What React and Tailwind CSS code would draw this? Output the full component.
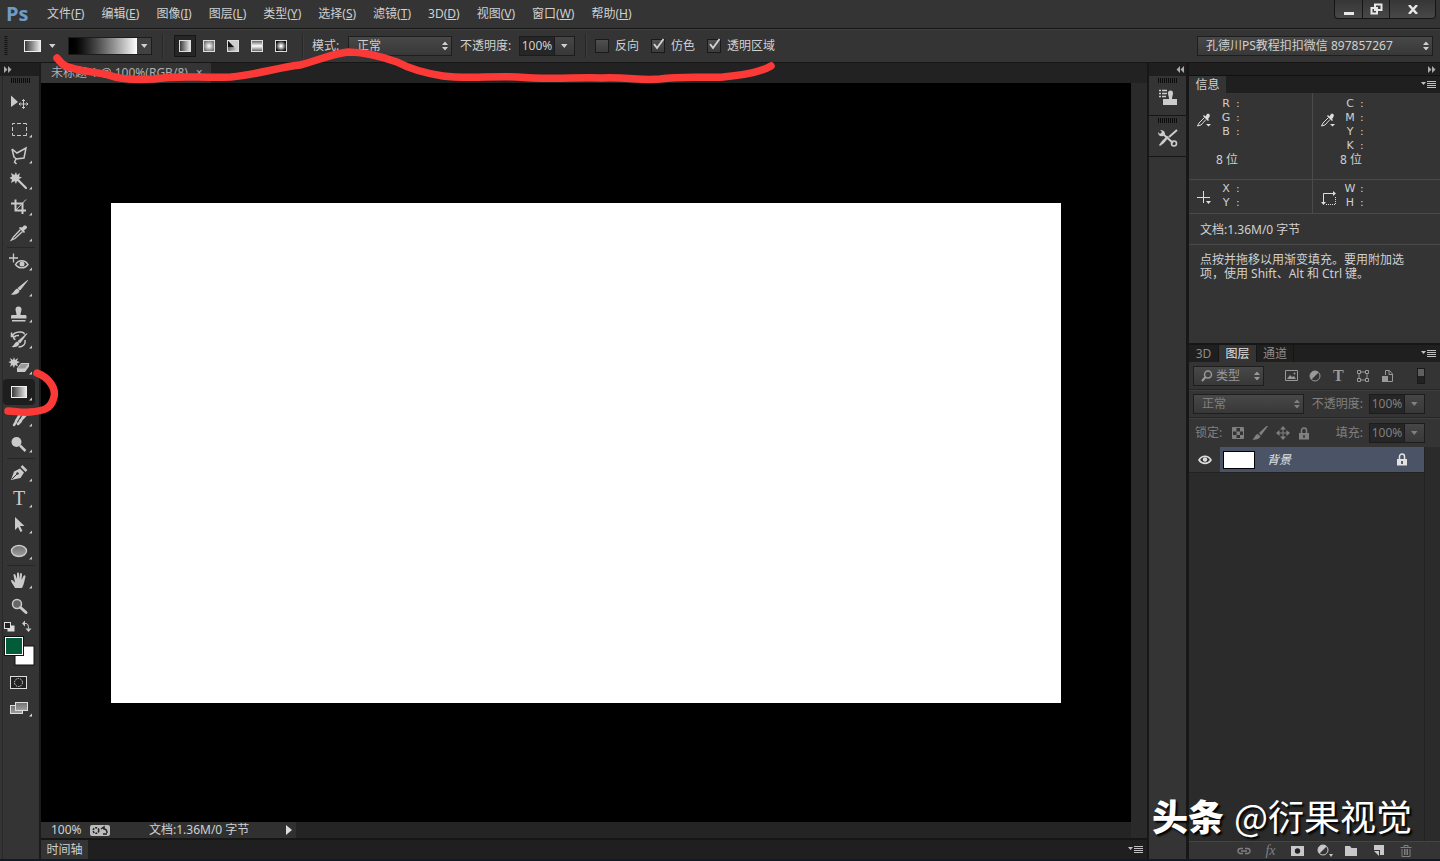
import React from 'react';
import clsx from 'clsx';

const MENUS = [
  ['文件', 'F'], ['编辑', 'E'], ['图像', 'I'], ['图层', 'L'], ['类型', 'Y'], ['选择', 'S'],
  ['滤镜', 'T'], ['3D', 'D'], ['视图', 'V'], ['窗口', 'W'], ['帮助', 'H'],
];

const Defs = () => (
  <svg width="0" height="0" className="absolute" aria-hidden="true">
    <defs>
      <linearGradient id="linear"><stop offset="0" stopColor="#333" /><stop offset="1" stopColor="#eee" /></linearGradient>
      <radialGradient id="radial"><stop offset="0" stopColor="#fff" /><stop offset="1" stopColor="#777" /></radialGradient>
      <linearGradient id="angle" x2="1" y2="1"><stop offset="0.2" stopColor="#444" /><stop offset="1" stopColor="#eee" /></linearGradient>
      <linearGradient id="reflected" x2="0" y2="1"><stop offset="0" stopColor="#555" /><stop offset="0.5" stopColor="#fff" /><stop offset="1" stopColor="#555" /></linearGradient>
      <radialGradient id="diamond"><stop offset="0.1" stopColor="#fff" /><stop offset="1" stopColor="#111" /></radialGradient>
      <linearGradient id="metal" x2="0" y2="1"><stop offset="0" stopColor="#707070" /><stop offset="1" stopColor="#a0a0a0" /></linearGradient>
    </defs>
  </svg>
);

// tool icons are drawn on a 32x26 cell
const TOOLS = [
  {
    name: '移动', plain: true,
    icon: <><path d="M8 5.500v11.500l7-5z" fill="currentColor" /><path d="M20.500 9.500v9M16 14h9M19 11l1.500-1.500L22 11M19 17l1.500 1.500L22 17M17.500 12.500L16 14l1.500 1.500M23.500 12.500L25 14l-1.500 1.500" stroke="currentColor" fill="none" /></>,
  },
  { name: '矩形选框', icon: <path d="M9.500 9V7.500H12M14 7.500h4M20 7.500h3.500V9M23.500 11v4M23.500 17v2.500H20M18 19.500h-4M12 19.500H9.500V17M9.500 15v-4" stroke="currentColor" fill="none" /> },
  { name: '多边形套索', icon: <path d="M9 7l5 4 9-5-2 10-8 1-1.500 3 2 2M9 7l2 8 2.500 2" stroke="currentColor" strokeWidth="1.500" fill="none" /> },
  {
    name: '魔棒',
    icon: <><path d="M13 4l1 3 3-2-1 3.500 3 1-3 1.500 1 3-3-1-1 3-1.500-3L8 15l1-3.500-2.500-1.500L9 8.500 8 5l3.500 2z" fill="currentColor" /><path d="M15.500 12.500l7.500 7.500" stroke="currentColor" strokeWidth="2.200" strokeLinecap="round" /></>,
  },
  {
    name: '裁剪',
    icon: <><path d="M8 9.500h11.500V20M12.500 5.500V16.500H23" stroke="currentColor" strokeWidth="2" fill="none" /><path d="M13 16l10-10.500" stroke="currentColor" /></>,
  },
  {
    name: '吸管',
    icon: <><path d="M17.500 9.500l-7 7.500-2 3 3.500-1.500 7.500-7" stroke="currentColor" strokeWidth="1.300" fill="none" /><path d="M16 8l5 5 1-1-1-1.500 2.500-2c1.500-2-.5-3.500-2.500-3l-2 2-2-.5z" fill="currentColor" /></>,
  },
  {
    name: '红眼', gap: true,
    icon: <><path d="M10.500 4.500v9M6 9h9" stroke="currentColor" strokeWidth="1.300" /><path d="M12.500 15.500c3-5 9.500-5 12.500 0-3 4.500-9.500 4.500-12.500 0z" stroke="currentColor" strokeWidth="1.400" fill="none" /><circle cx="19" cy="15" r="2.500" fill="currentColor" /></>,
  },
  {
    name: '画笔',
    icon: <><path d="M24.500 5.500L17 15l-2-1.800z" fill="currentColor" stroke="currentColor" /><path d="M14 13.500c1.500.5 2.500 1.500 2.500 3-2 3-5 3.500-9 3 3-1 3.500-4.500 6.500-6z" fill="currentColor" /></>,
  },
  { name: '图章', icon: <path d="M12.500 8.500a3 3 0 116 0c0 2-1 3-1 5.500h5c1 0 1 .5 1 3.500H8c0-3 0-3.500 1-3.500h4.500c0-2.500-1-3.500-1-5.500zM9 19h13.500v1.500H9z" fill="currentColor" /> },
  {
    name: '历史画笔',
    icon: <><path d="M9 9c3-5 12-5 12.500-1.500M12.500 12.500c-4-1-1-4.500 3.500-4M8.500 5.500v4H13M22 13c1 4-2 7-6.500 7" stroke="currentColor" strokeWidth="1.500" fill="none" /><path d="M24 6.500L17 16l-2-1.800z" fill="currentColor" stroke="currentColor" strokeWidth=".8" /><path d="M14 14.500c1.500.5 2.300 1.200 2.300 2.500-1.500 3-4.500 3.500-8 3 2.500-1 3-4 5.700-5.500z" fill="currentColor" /></>,
  },
  {
    name: '魔术橡皮擦',
    icon: <><path d="M11 4l1 3 3-2-1 3 3 1-3 1.500 1 3-3-1.500-1 3-1.500-3L7 14l1-3.500-2.500-1.500L8 8 7 5l3 2z" fill="currentColor" /><path d="M18 10.500h8l-4 5.500h-8z" fill="#999" stroke="currentColor" /><path d="M14 16h8l4-5.500v3L22 19h-8z" fill="currentColor" /></>,
  },
  { name: '渐变', active: true, icon: <rect x="8.500" y="7.500" width="15" height="11" fill="url(#linear)" stroke="#eee" /> },
  { name: '涂抹', icon: <path d="M11 20l2-3M13 16l5-8 3 2-4 7M15 19l3-3M17 16l5-5 2-3" stroke="currentColor" strokeWidth="2.500" strokeLinecap="round" fill="none" /> },
  {
    name: '减淡',
    icon: <><circle cx="13.500" cy="11" r="5" fill="currentColor" /><path d="M17 14.500l5.500 5.500" stroke="currentColor" strokeWidth="2.500" /></>,
  },
  {
    name: '钢笔', gap: true,
    icon: <><path d="M8 20l3-8.500 6-3 4 4-3.500 5.500z" fill="currentColor" /><path d="M9 19l5-5" stroke="#343434" /><path d="M18.500 6l5 5" stroke="currentColor" strokeWidth="2.500" /><circle cx="14.500" cy="13.500" r="1.200" fill="#343434" /></>,
  },
  { name: '文字', icon: <text x="16" y="19" textAnchor="middle" fill="currentColor" className="font-['Liberation_Serif',serif] text-[20px]">T</text> },
  { name: '路径选择', icon: <path d="M12 5v13l3-3 2.500 5 2-1-2.500-5h4.500z" fill="currentColor" /> },
  { name: '椭圆', icon: <ellipse cx="16" cy="13" rx="7.500" ry="5.500" fill="url(#metal)" stroke="currentColor" strokeWidth="1.400" /> },
  {
    name: '抓手', gap: true,
    icon: <path d="M12 21c-1-3-4-5-4-8 1.500-.5 2.500 1 4 2.500L10.500 8c0-1.500 1.500-1.500 2 0l1.500 4V6.500c0-1.500 2-1.500 2 0V12l1-5c.5-1.500 2-1 2 .5L18.500 13l2-4c1-1.500 2-.5 2 .5-1 4-1.500 8-3.500 11.500z" fill="currentColor" />,
  },
  {
    name: '缩放', plain: true,
    icon: <><circle cx="14" cy="11" r="4.500" fill="#666" stroke="currentColor" strokeWidth="1.500" /><path d="M17.500 14.500l5.500 5" stroke="currentColor" strokeWidth="3" strokeLinecap="round" /></>,
  },
];

const MODES = [
  <rect key="a" x=".5" y=".5" width="11" height="11" fill="url(#linear)" stroke="#ddd" />,
  <rect key="b" x=".5" y=".5" width="11" height="11" fill="url(#radial)" stroke="#ddd" />,
  <g key="c"><rect x=".5" y=".5" width="11" height="11" fill="url(#angle)" stroke="#ddd" /><path d="M1 1h10v10z" fill="#ccc" /><path d="M1 1l6 6H1z" fill="#111" /></g>,
  <rect key="d" x=".5" y=".5" width="11" height="11" fill="url(#reflected)" stroke="#ddd" />,
  <rect key="e" x=".5" y=".5" width="11" height="11" fill="url(#diamond)" stroke="#ddd" />,
];
const MODE_NAMES = ['线性渐变', '径向渐变', '角度渐变', '对称渐变', '菱形渐变'];

const Down = () => <svg width="7" height="4" viewBox="0 0 7 4" className="shrink-0"><path d="M0 0h6.500L3.300 4z" fill="currentColor" /></svg>;

const Chevrons = ({ left }) => (
  <svg width="8" height="7" viewBox="0 0 8 7" className={clsx(left && 'rotate-180')}><path d="M0 0l3.500 3.500L0 7zM4 0l3.500 3.500L4 7z" fill="#aaa" /></svg>
);

const Grip = () => (
  <svg width="20" height="5" viewBox="0 0 20 5"><path d="M.5 0v5M2.500 0v5M4.500 0v5M6.500 0v5M8.500 0v5M10.500 0v5M12.500 0v5M14.500 0v5M16.500 0v5M18.500 0v5" stroke="#0c0c0c" /></svg>
);

const PanelMenu = () => (
  <button aria-label="面板菜单" className="ml-auto mr-1 text-[#c0c0c0]">
    <svg width="15" height="9" viewBox="0 0 15 9" className="block"><path d="M0 2h5L2.500 5z" fill="currentColor" /><path d="M6 1.500h9M6 3.500h9M6 5.500h9M6 7.500h9" stroke="currentColor" /></svg>
  </button>
);

const Dropdown = ({ label, value, className, inset = 'pl-2' }) => (
  <span className={clsx('relative flex shrink-0', className)}>
    <select aria-label={label} className={clsx('h-full w-full appearance-none border border-[#1e1e1e] bg-linear-to-b from-[#484848] to-[#383838] pr-4', inset)}>
      <option>{value}</option>
    </select>
    <svg width="6" height="9" viewBox="0 0 6 9" className="pointer-events-none absolute right-1 top-1/2 -translate-y-1/2"><path d="M0 3.500L3 0l3 3.500zM0 5.500L3 9l3-3.500z" fill="currentColor" /></svg>
  </span>
);

const Percent = ({ label, className }) => (
  <span className={clsx('flex shrink-0', className)}>
    <input aria-label={label} defaultValue="100%" className="w-9 border border-[#1c1c1c] bg-[#262626] text-center" />
    <button aria-label={label + '滑块'} className="flex w-5 items-center justify-center border border-l-0 border-[#1c1c1c] bg-linear-to-b from-[#464646] to-[#383838]"><Down /></button>
  </span>
);

const Check = ({ label, checked }) => (
  <label className="flex shrink-0 items-center gap-1.5">
    <span className="relative flex">
      <input type="checkbox" defaultChecked={checked} className="peer h-3.5 w-3.5 appearance-none border border-[#1a1a1a] bg-linear-to-b from-[#505050] to-[#3c3c3c]" />
      <svg width="14" height="14" viewBox="0 0 14 14" className="pointer-events-none absolute left-0 top-0 hidden overflow-visible peer-checked:block"><path d="M3 5l3 4 6.500-9" stroke="#d4d4d4" strokeWidth="1.800" fill="none" /></svg>
    </span>
    {label}
  </label>
);

const Divider = () => <span className="h-6 w-0.5 shrink-0 border-l border-[#262626] bg-[#3d3d3d]" />;

const MenuBar = () => (
  <header className="flex h-[29px] shrink-0 justify-between border-b border-[#161616]">
    <div className="flex items-center">
      <span className="w-[47px] pl-1.5 font-['Open_Sans',sans-serif] text-[20px] font-bold text-[#6d9cc9]">Ps</span>
      <nav className="flex gap-[17px]">
        {MENUS.map(([name, key]) => (
          <button key={key} className="whitespace-nowrap">{name}(<u>{key}</u>)</button>
        ))}
      </nav>
    </div>
    <div className="mr-1 flex h-[19px] divide-x divide-[#151515] rounded-b border border-t-0 border-[#151515] bg-linear-to-b from-[#363636] to-[#484848] text-[#e8e8e8]">
      <button aria-label="最小化" className="flex w-7 items-center justify-center"><svg width="12" height="12"><path d="M1 9h10v3H1z" fill="currentColor" /></svg></button>
      <button aria-label="还原" className="flex w-[27px] items-center justify-center"><svg width="13" height="12" viewBox="0 0 13 12"><path d="M5 1.500h6.500V7H5zM1.500 5H7v5.500H1.500z" stroke="currentColor" strokeWidth="2" fill="none" /></svg></button>
      <button aria-label="关闭" className="flex w-[45px] items-center justify-center"><svg width="10" height="9" viewBox="0 0 10 9"><path d="M1 0l8 9M9 0L1 9" stroke="currentColor" strokeWidth="2.400" /></svg></button>
    </div>
  </header>
);

const OptionsBar = () => (
  <div className="flex h-[34px] shrink-0 items-center border-b border-t border-b-[#161616] border-t-[#404040] pl-1">
    <svg width="4" height="20" className="shrink-0"><path d="M2 0v20" stroke="#111" strokeWidth="3" strokeDasharray="1 1" /></svg>
    <button aria-label="工具预设" className="ml-4 flex shrink-0 items-center gap-2">
      <svg width="17" height="12"><rect x=".5" y=".5" width="16" height="11" fill="url(#linear)" stroke="#eee" /></svg><Down />
    </button>
    <button aria-label="渐变" className="ml-3 flex h-[18px] w-[84px] shrink-0 border border-[#1c1c1c]">
      <span className="h-full flex-1 bg-linear-to-r from-black to-white" />
      <span className="flex h-full w-3.5 items-center justify-center bg-[#424242]"><Down /></span>
    </button>
    <div className="ml-2.5 flex items-center gap-2.5"><Divider />
      <div className="flex gap-0.5">
        {MODES.map((icon, i) => (
          <button key={i} aria-label={MODE_NAMES[i]} className={clsx('flex h-[22px] w-[22px] items-center justify-center border', i === 0 ? 'border-[#161616] bg-[#262626]' : 'border-transparent')}>
            <svg width="12" height="12">{icon}</svg>
          </button>
        ))}
      </div>
      <Divider />
    </div>
    <span className="ml-2 w-9 shrink-0">模式:</span>
    <Dropdown label="模式" value="正常" className="h-5 w-[104px]" />
    <span className="ml-2 w-[59px] shrink-0 whitespace-nowrap">不透明度:</span>
    <Percent label="不透明度" className="h-5" />
    <div className="ml-2.5 flex items-center gap-2"><Divider />
      <div className="flex gap-3">
        <Check label="反向" />
        <Check label="仿色" checked />
        <Check label="透明区域" checked />
      </div>
    </div>
    <Dropdown label="工作区" value="孔德川PS教程扣扣微信 897857267" className="ml-auto mr-[7px] h-5 w-[236px]" />
  </div>
);

const Toolbar = () => (
  <aside className="flex w-[41px] shrink-0 flex-col border-r-2 border-[#1b1b1b]">
    <div className="flex h-[13px] shrink-0 items-center bg-[#1f1f1f] pl-1"><Chevrons /></div>
    <div className="ml-0.5 flex flex-1 flex-col border-l border-[#282828]">
      <div className="flex h-3.5 justify-center pt-0.5"><Grip /></div>
      {TOOLS.map(({ name, icon, plain, active, gap }) => (
        <React.Fragment key={name}>
          {gap && <span className="mx-1 my-px h-px bg-[#262626]" />}
          <button aria-label={name} className={clsx('h-[26px] w-8 text-[#cacaca]', active && 'rounded-sm bg-[#1e1e1e]')}>
            <svg width="32" height="26" viewBox="0 0 32 26" className="block">{icon}{!plain && <path d="M29 18.500v3h-3z" fill="currentColor" />}</svg>
          </button>
        </React.Fragment>
      ))}
      <svg width="32" height="16" viewBox="0 0 32 16" className="shrink-0">
        <rect x="4.500" y="6.500" width="7" height="6" fill="#ddd" /><rect x="1.500" y="3.500" width="6" height="6" fill="#222" stroke="#ddd" />
        <path d="M19 4.500l3-3v6zM25.500 13l-3-3.500h6z" fill="#ccc" /><path d="M21 4.500h2q2.500 0 2.500 5" stroke="#ccc" fill="none" />
      </svg>
      <svg width="32" height="32" viewBox="0 0 32 32" className="shrink-0">
        <rect x="12" y="11" width="19" height="19" fill="#fff" stroke="#111" />
        <rect x="1" y="1" width="20" height="20" fill="#111" /><rect x="2" y="2" width="18" height="18" fill="#fff" /><rect x="3" y="3" width="16" height="16" fill="#035c38" />
      </svg>
      <button aria-label="快速蒙版" className="mt-0.5 h-[26px] w-8 text-[#ddd]">
        <svg width="32" height="26" viewBox="0 0 32 26"><rect x="7.500" y="7.500" width="16" height="12" fill="#222" stroke="currentColor" /><circle cx="15.500" cy="13.500" r="4" stroke="currentColor" fill="none" strokeDasharray="1.500 1" /></svg>
      </button>
      <button aria-label="屏幕模式" className="h-[26px] w-8 text-[#ddd]">
        <svg width="32" height="26" viewBox="0 0 32 26"><rect x="7.500" y="10.500" width="12" height="8" fill="url(#metal)" stroke="currentColor" /><rect x="12.500" y="7.500" width="12" height="8" fill="url(#metal)" stroke="currentColor" /><path d="M29 18.500v3h-3z" fill="currentColor" /></svg>
      </button>
    </div>
  </aside>
);

const Workspace = () => (
  <main className="flex min-w-0 flex-1 flex-col">
    <div className="flex h-5 shrink-0 bg-[#222222]">
      <div className="flex w-[170px] items-center gap-2 bg-[#343434] pl-2.5 text-[#b0b0b0]">
        <span className="whitespace-nowrap">未标题-1 @ 100%(RGB/8)</span>
        <button aria-label="关闭文档">×</button>
      </div>
    </div>
    <div className="flex min-h-0 flex-1">
      <div className="flex min-w-0 flex-1 flex-col">
        <div className="flex min-h-0 flex-1 items-center justify-center bg-black"><div className="h-[500px] w-[950px] bg-white" /></div>
        <div className="flex h-4 shrink-0 items-center bg-[#242424]">
          <div className="flex h-full w-[255px] items-center bg-[#303030]">
            <span className="w-[49px] pl-2.5">100%</span>
            <svg width="20" height="11" viewBox="0 0 20 11"><rect width="20" height="11" rx="2" fill="#bbb" /><circle cx="6" cy="5.500" r="2.800" fill="none" stroke="#222" strokeWidth="1.600" strokeDasharray="2 1" /><path d="M11 4l3-2v2q3 0 3 4M17 9h-4" stroke="#222" strokeWidth="1.500" fill="none" /></svg>
            <span className="ml-[39px] flex-1">文档:1.36M/0 字节</span>
            <button aria-label="状态栏菜单" className="mr-1"><svg width="6" height="10"><path d="M0 0l6 5-6 5z" fill="#ddd" /></svg></button>
          </div>
        </div>
      </div>
      <div className="w-4 bg-[#2a2a2a]" />
    </div>
    <div className="flex h-[21px] shrink-0 items-center border-t-2 border-[#161616] bg-[#1f1f1f]">
      <button className="h-full w-[47px] bg-[#343434]">时间轴</button>
      <PanelMenu />
    </div>
  </main>
);

const Dock = () => (
  <aside className="flex w-[41px] shrink-0 flex-col border-x-2 border-[#171717]">
    <div className="flex h-[13px] items-center justify-end bg-[#1f1f1f] pr-0.5"><Chevrons left /></div>
    <div className="flex h-10 flex-col items-center gap-1.5 border-b border-[#161616] pt-0.5">
      <Grip />
      <button aria-label="仿制源" className="text-[#ccc]"><svg width="20" height="17" viewBox="0 0 20 17" className="block"><path d="M1 1.500h2M4 1.500h5M1 4.500h2M4 4.500h5M1 7.500h2M4 7.500h4" stroke="currentColor" strokeWidth="1.500" /><path d="M10 4a2.500 2.500 0 015 0c0 3-1 3-1 6h5v6H5v-6h6c0-3-1-3-1-6z" fill="currentColor" /></svg></button>
    </div>
    <div className="flex h-[41px] flex-col items-center gap-1.5 border-b border-[#161616] pt-0.5">
      <Grip />
      <button aria-label="工具预设面板" className="text-[#ccc]"><svg width="20" height="18" viewBox="0 0 20 18" className="block"><path d="M5 5l10 9M19 1l-8 7" stroke="currentColor" strokeWidth="2" /><path d="M11 8l-5 6-4 3-1-1 3-4 5-5z" fill="currentColor" /><path d="M2 1l2 2-2 2-2-2c0 3 2 5 5 4s3-6-3-6z" fill="currentColor" /><circle cx="16" cy="14.500" r="2.500" stroke="currentColor" strokeWidth="1.600" fill="none" /></svg></button>
    </div>
  </aside>
);

const Dropper = () => (
  <svg width="15" height="15" viewBox="0 0 15 15" className="shrink-0"><path d="M7.500 4.500L2 10l-1.500 3L4 12l5-5.500" stroke="#ddd" fill="none" /><path d="M6 3l5 5 1-1-1-1c3-3 2-6-1-5L8.500 3.500 7 2z" fill="#ddd" /><path d="M9 11h5l-2.500 2.500z" fill="#ddd" /></svg>
);

const Readout = ({ rows, icon, bits }) => (
  <div className="flex gap-1">
    {icon}
    <div className="leading-[14px]">
      {rows.map((r) => <div key={r} className="flex pl-1 font-['DejaVu_Sans',sans-serif] text-[11px]"><span className="w-3 text-center">{r}</span><span className="pl-1">:</span></div>)}
      {bits && <div className={rows.length === 3 ? 'pt-3.5' : ''}>8 位</div>}
    </div>
  </div>
);

const InfoPanel = () => (
  <section className="flex h-[267px] shrink-0 flex-col">
    <div className="flex h-[17px] shrink-0 items-center bg-[#1f1f1f]">
      <button className="h-full w-[37px] bg-[#343434]">信息</button>
      <PanelMenu />
    </div>
    <div className="grid h-[87px] grid-cols-[124px_1fr] divide-x divide-[#4a4a4a] border-b border-[#4a4a4a] [&>div]:pt-1">
      <div className="flex items-start pl-2 [&_svg]:mt-4"><Readout rows={['R', 'G', 'B']} icon={<Dropper />} bits /></div>
      <div className="flex items-start pl-2 [&_svg]:mt-4"><Readout rows={['C', 'M', 'Y', 'K']} icon={<Dropper />} bits /></div>
    </div>
    <div className="grid h-[34px] grid-cols-[124px_1fr] divide-x divide-[#4a4a4a] border-b border-[#4a4a4a] [&>div]:pt-0.5 [&_svg]:mt-2">
      <div className="pl-2"><Readout rows={['X', 'Y']} icon={<svg width="15" height="16" className="shrink-0"><path d="M6.500 1v12M0 7.500h13" stroke="#ddd" /><path d="M9 11h5l-2.500 3z" fill="#ddd" /></svg>} /></div>
      <div className="pl-2"><Readout rows={['W', 'H']} icon={<svg width="15" height="16" className="shrink-0"><path d="M2.500 14V3.500H14" stroke="#ddd" fill="none" /><path d="M0 12h5l-2.500 3zM12 1l3 2.500-3 2.500z" fill="#ddd" /><path d="M5 14.500h9.500V7" stroke="#ddd" strokeDasharray="1 1" fill="none" /></svg>} /></div>
    </div>
    <p className="flex h-[31px] items-center border-b border-[#4a4a4a] pl-[11px] pt-0.5">文档:1.36M/0 字节</p>
    <p className="px-[11px] pt-2 leading-[14px]">点按并拖移以用渐变填充。要用附加选<br />项，使用 Shift、Alt 和 Ctrl 键。</p>
  </section>
);

const LockIcon = () => <svg width="12" height="13" viewBox="0 0 12 13"><path d="M3.500 6V3.500a2.500 2.500 0 015 0V6" stroke="currentColor" strokeWidth="1.500" fill="none" /><path d="M1 6h10v6.500H1z" fill="currentColor" /><path d="M6 8v3" stroke="#333" strokeWidth="1.500" /></svg>;

const LayersPanel = () => (
  <section className="flex min-h-0 flex-1 flex-col border-t-2 border-[#161616]">
    <div className="flex h-[17px] shrink-0 items-center divide-x divide-[#151515] bg-[#1f1f1f] text-[#8c8c8c]">
      <button className="h-full w-[30px]">3D</button>
      <button className="h-full w-[38px] bg-[#343434] text-[#e0e0e0]">图层</button>
      <button className="h-full w-[37px]">通道</button>
      <PanelMenu />
    </div>
    <div className="flex h-7 shrink-0 items-center border-b border-[#262626] pl-1 text-[#999]">
      <span className="relative flex">
        <Dropdown label="滤镜类型" value="类型" className="h-5 w-[71px]" inset="pl-[22px]" />
        <svg width="12" height="12" viewBox="0 0 12 12" className="absolute left-2 top-1"><circle cx="7" cy="4.500" r="3.500" stroke="currentColor" strokeWidth="1.500" fill="none" /><path d="M4.500 7L1 11" stroke="currentColor" strokeWidth="2" /></svg>
      </span>
      <div className="ml-[21px] flex items-center gap-3 [&>button]:flex [&>button]:w-3">
        <button aria-label="像素图层"><svg width="13" height="11" className="shrink-0"><path d="M.5.500h12v10H.5z" stroke="currentColor" fill="none" /><path d="M2 9l3-4 2 2 2-1 2 3z" fill="currentColor" /><circle cx="9.500" cy="3.500" r="1" fill="currentColor" /></svg></button>
        <button aria-label="调整图层"><svg width="12" height="12"><circle cx="6" cy="6" r="5" stroke="currentColor" fill="none" /><path d="M9.500 2.500l-7 7a5 5 0 010-7 5 5 0 017 0z" fill="currentColor" /></svg></button>
        <button aria-label="文字图层" className="font-['Liberation_Serif',serif] text-[16px] font-bold">T</button>
        <button aria-label="形状图层"><svg width="12" height="12"><path d="M2 2h8v8H2z" stroke="currentColor" fill="none" /><path d="M.5.500h3v3h-3zM8.500.500h3v3h-3zM.5 8.500h3v3h-3zM8.500 8.500h3v3h-3z" fill="#343434" stroke="currentColor" /></svg></button>
        <button aria-label="智能对象"><svg width="12" height="12"><path d="M4.500 5V.5h4L11.500 4v7.500H7M8 1v3.500h3" stroke="currentColor" fill="none" /><path d="M1 6h6v6H1z" fill="currentColor" /></svg></button>
      </div>
      <button aria-label="打开或关闭图层过滤" className="ml-auto mr-[15px] h-4 w-2 border border-[#1a1a1a] bg-linear-to-b from-[#606060] from-50% to-[#222] to-50%" />
    </div>
    <div className="flex h-7 shrink-0 items-center border-b border-t border-b-[#262626] border-t-[#3f3f3f] pl-1 text-[#808080]">
      <Dropdown label="混合模式" value="正常" className="h-5 w-[111px]" />
      <span className="ml-auto pr-1.5">不透明度:</span>
      <Percent label="图层不透明度" className="mr-[15px] h-5" />
    </div>
    <div className="flex h-[29px] shrink-0 items-center border-t border-[#3f3f3f] pl-1.5 text-[#808080]">
      <span>锁定:</span>
      <div className="ml-2.5 flex items-center gap-2">
        <button aria-label="锁定透明像素"><svg width="12" height="12"><path d="M.5.500h11v11H.5z" stroke="currentColor" fill="#333" /><path d="M1 1h3.500v3.500H1zM8 1h3v3.500H8zM4.500 4.500H8V8H4.500zM1 8h3.500v3H1zM8 8h3v3H8z" fill="currentColor" /></svg></button>
        <button aria-label="锁定图像像素"><svg width="16" height="14"><path d="M16 0l-1-.5-8 7.500 2 2.500zM6 8l2.500 2.500c-1.500 3-5 3.500-8.500 3 3-1 2.500-5 6-5.500z" fill="currentColor" /></svg></button>
        <button aria-label="锁定位置"><svg width="14" height="14"><path d="M7 2v10M2 7h10" stroke="currentColor" /><path d="M7 0l3 3.500H4zM7 14l3-3.500H4zM0 7l3.500-3v6zM14 7l-3.500-3v6z" fill="currentColor" /></svg></button>
        <button aria-label="锁定全部"><LockIcon /></button>
      </div>
      <span className="ml-auto pr-1.5">填充:</span>
      <Percent label="填充" className="mr-[15px] h-5" />
    </div>
    <div className="flex min-h-0 flex-1 bg-[#2b2b2b]">
      <div className="flex-1">
        <div className="flex h-[26px] border-b border-[#222]">
          <button aria-label="指示图层可见性" className="flex w-[31px] items-center justify-center bg-[#343434] text-[#ddd]"><svg width="14" height="10" viewBox="0 0 14 10"><path d="M1 5c3-5 9-5 12 0-3 4.500-9 4.500-12 0z" stroke="currentColor" strokeWidth="1.600" fill="none" /><circle cx="7" cy="4.500" r="2.200" fill="currentColor" /></svg></button>
          <div className="flex flex-1 items-center bg-[#4b5366] pl-[3px] pr-4 text-[#e2e2e2]">
            <span className="h-[18px] w-8 border border-black bg-white" />
            <span className="ml-3 flex-1 italic">背景</span>
            <LockIcon />
          </div>
        </div>
      </div>
      <div className="w-4 border-l border-[#222]" />
    </div>
    <div className="flex h-[18px] shrink-0 items-center justify-end gap-3.5 border-t border-[#444] pr-7 text-[#c8c8c8] [&>button]:flex [&>button]:w-[13px] [&>button]:justify-center">
      <button aria-label="链接图层" className="text-[#808080]"><svg width="14" height="8" className="shrink-0"><path d="M6 1.500H3.500a2.500 2.500 0 000 5H6M8 1.500h2.500a2.500 2.500 0 010 5H8M4 4h6" stroke="currentColor" strokeWidth="1.400" fill="none" /></svg></button>
      <button aria-label="图层样式" className="font-['Liberation_Serif',serif] text-[14px] italic text-[#808080]">fx</button>
      <button aria-label="图层蒙版"><svg width="13" height="10" className="shrink-0"><path d="M0 0h13v10H0z" fill="currentColor" /><circle cx="6.500" cy="5" r="2.700" fill="#222" /></svg></button>
      <button aria-label="新建调整图层"><svg width="16" height="13" className="shrink-0"><circle cx="6" cy="6" r="5" stroke="currentColor" fill="none" /><path d="M9.500 2.500l-7 7a5 5 0 010-7 5 5 0 017 0zM12 10h4l-2 3z" fill="currentColor" /></svg></button>
      <button aria-label="新建组"><svg width="13" height="10"><path d="M0 0h5l1.500 2H12v8H0z" fill="currentColor" /></svg></button>
      <button aria-label="新建图层"><svg width="12" height="11"><path d="M1 0h10v10H7V5H1z" fill="currentColor" /><path d="M1 6h5v5z" fill="currentColor" /></svg></button>
      <button aria-label="删除图层" className="text-[#808080]"><svg width="12" height="12"><path d="M.5 2.500h11M4 2V.5h4V2M2 4v7.500h8V4M4.500 4v6M6 4v6M7.500 4v6" stroke="currentColor" fill="none" /></svg></button>
    </div>
  </section>
);

// red pen marks over the options bar and the gradient tool
const Markup = () => (
  <svg width="800" height="430" viewBox="0 0 800 430" className="pointer-events-none absolute left-0 top-0" fill="none" stroke="#fb3a38" strokeWidth="7.500" strokeLinecap="round" strokeLinejoin="round">
    <path d="M57 58C62 64 65 67 72 68C84 72 98 72 108 75C122 80 139 80 154 79C176 75 198 78 231 77C260 74 275 68 300 65C316 61 331 54 348 52C365 52 380 56 397 62C410 69 424 73 443 76C465 79 490 76 517 77C550 80 575 77 602 78C628 77 642 81 660 79C680 76 704 78 723 77C745 75 761 72 771 66" />
    <path d="M37 373C50 378 56 389 54 397C51 410 42 411 30 412C21 413 15 411 8 411" />
  </svg>
);

export default function App() {
  return (
    <div className="relative flex h-screen min-h-[760px] w-full flex-col overflow-hidden border-b-2 border-[#0c1d28] bg-[#343434] font-['Noto_Sans','Noto_Sans_CJK_SC',sans-serif] text-[12px] leading-4 text-[#d0d0d0]">
      <Defs />
      <MenuBar />
      <OptionsBar />
      <div className="flex min-h-0 flex-1">
        <Toolbar />
        <Workspace />
        <Dock />
        <aside className="flex w-[252px] shrink-0 flex-col border-l border-[#171717]">
          <div className="flex h-[13px] shrink-0 items-center justify-end border-b border-[#111] bg-[#1f1f1f] pr-1"><Chevrons /></div>
          <InfoPanel />
          <LayersPanel />
        </aside>
      </div>
      <Markup />
      <div className="pointer-events-none absolute bottom-6 right-7 flex items-center gap-2.5 whitespace-nowrap font-['Noto_Sans_CJK_SC',sans-serif] text-[36px] leading-10 text-white [text-shadow:2px_2px_2px_#000]">
        <span className="font-black">头条</span>
        <span>@衍果视觉</span>
      </div>
    </div>
  );
}
